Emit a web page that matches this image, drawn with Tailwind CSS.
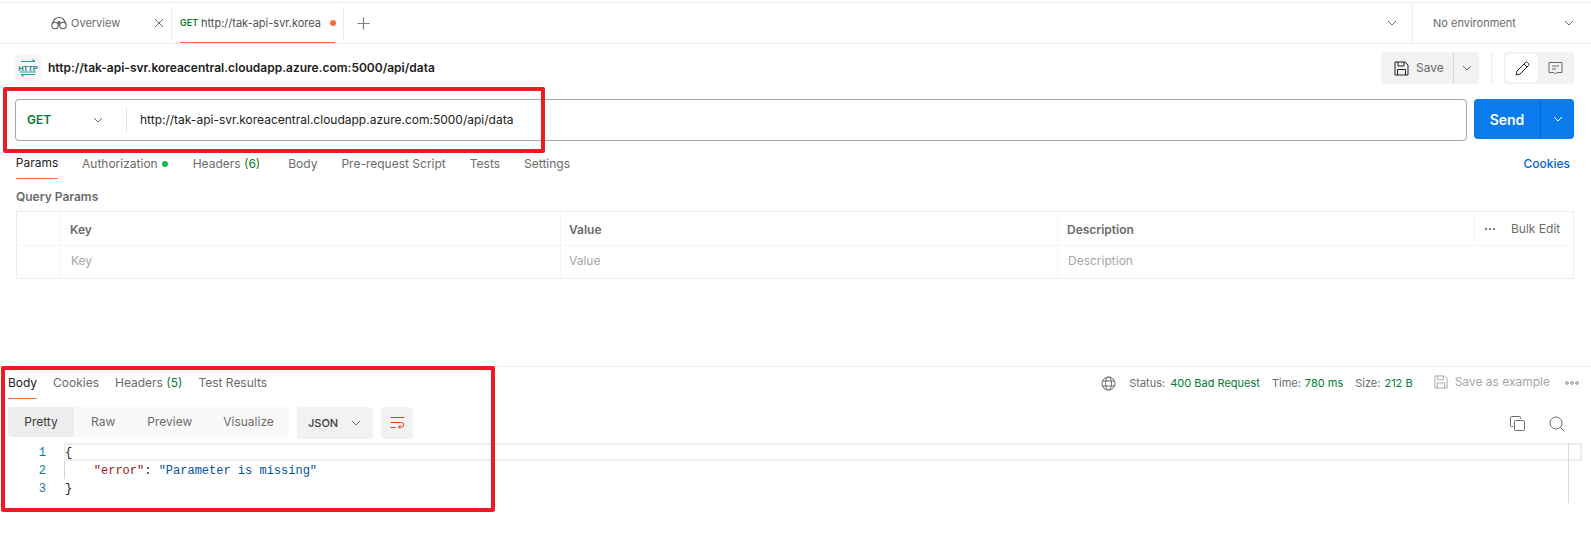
<!DOCTYPE html>
<html>
<head>
<meta charset="utf-8">
<script src="https://cdn.jsdelivr.net/npm/@tailwindcss/browser@4"></script>
</head>
<body class="bg-white">
<div class="relative w-[1591px] h-[537px] overflow-hidden bg-white font-['Inter','Liberation_Sans',sans-serif] text-[12px] text-[#6b6b6b]">

  <!-- tab bar -->
  <div class="mt-[2px] h-[42px] flex items-stretch border-t border-b border-[#ededed]">
    <div class="w-[171px] flex items-center pl-[51px] relative">
      <svg class="w-[16px] h-[16px] mr-[4px]" viewBox="0 0 16 16" fill="none" stroke="#5a5a5a" stroke-width="1.1"><circle cx="4" cy="10.500" r="3.200"/><circle cx="12" cy="10.500" r="3.200"/><path d="M1.500 8.500C2.500 4.500 4 2.500 8 2.500s5.500 2 6.500 6M8 10.500a2.500 2.500 0 0 0-1-3M8 10.500a2.500 2.500 0 0 1 1-3M6.800 7.200c.7-.6 1.700-.6 2.400 0"/></svg>
      <span class="w-[50px] text-[11px] text-[#6b6b6b]">Overview</span>
      <svg class="ml-[33px] w-[10px] h-[10px]" viewBox="0 0 10 10" stroke="#6b6b6b" stroke-width="1"><path d="M1 1l8 8M9 1l-8 8"/></svg>
    </div>
    <div class="w-[172px] flex items-center border-l border-[#ededed] my-[4px] relative">
      <div class="flex items-center w-[158px] ml-[8px] h-full">
        <span class="text-[9px] font-semibold text-[#007f31] w-[21px]">GET</span>
        <span class="w-[123px] text-[11px] whitespace-nowrap text-[#505050]">http://tak-api-svr.korea</span>
        <span class="ml-[6px] w-[6px] h-[6px] rounded-full bg-[#ff6c37]"></span>
      </div>
      <span class="absolute left-[8px] w-[155px] -bottom-[4px] h-px bg-[#ff6c37]"></span>
    </div>
    <div class="flex items-center flex-1 border-l border-[#ededed] my-[4px] pl-[13px]">
      <svg class="w-[13px] h-[13px]" viewBox="0 0 13 13" stroke="#808080" stroke-width="1.200"><path d="M6.500 0.500v12M0.500 6.500h12"/></svg>
      <div class="flex-1"></div>
      <svg class="w-[10px] h-[6px] mr-[15px]" viewBox="0 0 10 6" fill="none" stroke="#6b6b6b"><path d="M1 1l4 4 4-4"/></svg>
    </div>
    <div class="w-[179px] flex items-center border-l border-[#ededed] pl-[20px]">
      <span class="w-[125px] text-[11px] text-[#6b6b6b]">No environment</span>
      <svg class="ml-[6px] w-[10px] h-[6px]" viewBox="0 0 10 6" fill="none" stroke="#6b6b6b"><path d="M1 1l4 4 4-4"/></svg>
    </div>
  </div>

  <!-- request title -->
  <div class="flex items-center h-[32px] mt-[8px] pl-[15px] pr-[17px]">
    <div class="w-[26px] h-[26px] rounded-[4px] bg-[#f7f7f7] flex items-center justify-center">
      <svg class="w-[20px] h-[20px]" viewBox="0 0 20 20" fill="none" stroke="#20a3a8" stroke-width="1.100"><path d="M3 3.500h14M14.500 1.500l2.500 2M3 16.500h14M3 16.500l2.500 2M2 14h16"/><text x="10" y="13" text-anchor="middle" font-size="7.500" font-weight="700" fill="#15808f" stroke="none" font-family="Liberation Sans">HTTP</text></svg>
    </div>
    <span class="ml-[7px] font-semibold text-[#212121]">http://tak-api-svr.koreacentral.cloudapp.azure.com:5000/api/data</span>
    <div class="flex-1"></div>
    <div class="w-[98px] h-[32px] rounded-[4px] bg-[#f2f2f2] flex items-center">
      <div class="w-[73px] h-full flex items-center pl-[13px] border-r border-[#d9d9d9]">
        <svg class="w-[15px] h-[15px]" viewBox="0 0 15 15" fill="none" stroke="#212121"><path d="M1 1h10l3 3v10H1zM4 1v4h6V1M3.500 14V8.500h8V14"/></svg>
        <span class="ml-[7px] text-[#6b6b6b]">Save</span>
      </div>
      <svg class="ml-[8px] w-[10px] h-[6px]" viewBox="0 0 10 6" fill="none" stroke="#6b6b6b"><path d="M1 1l4 4 4-4"/></svg>
    </div>
    <div class="mx-[12px] w-px h-[32px] bg-[#ededed]"></div>
    <div class="w-[70px] h-[32px] rounded-[4px] bg-[#f2f2f2] flex items-center p-[2px]">
      <div class="w-[32px] h-[28px] rounded-[4px] bg-white flex items-center justify-center">
        <svg class="w-[15px] h-[15px]" viewBox="0 0 15 15" fill="none" stroke="#212121"><path d="M1 14l1-4L10.500 1.500a1.400 1.400 0 0 1 2 0l1 1a1.400 1.400 0 0 1 0 2L5 13zM9 3l3 3"/></svg>
      </div>
      <div class="w-[34px] flex items-center justify-center">
        <svg class="w-[15px] h-[15px]" viewBox="0 0 15 15" fill="none" stroke="#6b6b6b"><path d="M1 1.500h13v10H9l-1.500 1.500L6 11.500H1zM4 5h7M4 8h4"/></svg>
      </div>
    </div>
  </div>

  <!-- url bar -->
  <div class="flex items-stretch h-[42px] mt-[15px] pl-[15px] pr-[17px]">
    <div class="w-[1452px] flex items-center rounded-[4px] border border-[#a6a6a6] bg-white">
      <span class="ml-[11px] w-[66px] font-semibold text-[#007f31]">GET</span>
      <svg class="w-[10px] h-[6px]" viewBox="0 0 10 6" fill="none" stroke="#6b6b6b"><path d="M1 1l4 4 4-4"/></svg>
      <div class="ml-[23px] w-px h-[26px] bg-[#e6e6e6]"></div>
      <span class="ml-[13px] text-[#212121]">http://tak-api-svr.koreacentral.cloudapp.azure.com:5000/api/data</span>
    </div>
    <div class="ml-[7px] w-[100px] h-[40px] rounded-[4px] bg-[#097bed] flex items-center text-white">
      <div class="w-[67px] h-full flex items-center justify-center border-r border-[#0265d2] text-[14px] font-semibold">Send</div>
      <svg class="ml-[12px] w-[10px] h-[6px]" viewBox="0 0 10 6" fill="none" stroke="#fff"><path d="M1 1l4 4 4-4"/></svg>
    </div>
  </div>

  <!-- request tabs -->
  <div class="h-[38px] flex items-stretch pl-[16px] pr-[20px]">
    <div class="w-[42px] pt-[7px] flex items-center justify-center text-[#212121] border-b border-[#ff6c37] whitespace-nowrap">Params</div>
    <div class="ml-[24px] pt-[7px] flex items-center whitespace-nowrap">Authorization<span class="ml-[4px] w-[6px] h-[6px] rounded-full bg-[#0cbb52]"></span></div>
    <div class="ml-[25px] pt-[7px] flex items-center whitespace-nowrap">Headers&nbsp;<span class="text-[#007f31]">(6)</span></div>
    <div class="ml-[28px] pt-[7px] flex items-center">Body</div>
    <div class="ml-[24px] pt-[7px] flex items-center whitespace-nowrap">Pre-request Script</div>
    <div class="ml-[24px] pt-[7px] flex items-center">Tests</div>
    <div class="ml-[24px] pt-[7px] flex items-center">Settings</div>
    <div class="flex-1"></div>
    <div class="pt-[7px] mr-[1px] flex items-center font-medium text-[#0265d2]">Cookies</div>
  </div>

  <!-- query params -->
  <div class="mt-[10px] ml-[16px] h-[16px] leading-[16px] font-semibold text-[#6b6b6b]">Query Params</div>
  <div class="mt-[6px] ml-[16px] w-[1558px] border border-[#ededed] text-[#6b6b6b]">
    <div class="grid grid-cols-[44px_500px_497px_417px_1fr] h-[34px] border-b border-[#f5f5f5] font-semibold">
      <div class="border-r border-[#f5f5f5]"></div>
      <div class="border-r border-[#f5f5f5] flex items-center pl-[9px] pt-[2px]">Key</div>
      <div class="border-r border-[#f5f5f5] flex items-center pl-[8px] pt-[2px]">Value</div>
      <div class="border-r border-[#f5f5f5] flex items-center pl-[9px] pt-[2px]">Description</div>
      <div class="flex items-center pl-[9px] font-normal">
        <svg class="w-[12px] h-[4px]" viewBox="0 0 12 4" fill="#808080"><circle cx="2" cy="2" r="1.200"/><circle cx="6" cy="2" r="1.200"/><circle cx="10" cy="2" r="1.200"/></svg>
        <span class="ml-[15px] whitespace-nowrap">Bulk Edit</span>
      </div>
    </div>
    <div class="grid grid-cols-[44px_500px_497px_1fr] h-[32px] text-[#a6a6a6]">
      <div class="border-r border-[#f5f5f5]"></div>
      <div class="border-r border-[#f5f5f5] flex items-center pl-[10px] pb-[2px]">Key</div>
      <div class="border-r border-[#f5f5f5] flex items-center pl-[8px] pb-[2px]">Value</div>
      <div class="flex items-center pl-[10px] pb-[2px]">Description</div>
    </div>
  </div>

  <!-- response -->
  <div class="mt-[87px] border-t border-[#ededed] h-[33px] flex items-stretch pl-[8px] pr-[12px]">
    <div class="w-[29px] flex items-center justify-center text-[#212121] border-b border-[#ff6c37]">Body</div>
    <div class="ml-[16px] flex items-center">Cookies</div>
    <div class="ml-[16px] flex items-center whitespace-nowrap">Headers&nbsp;<span class="text-[#007f31]">(5)</span></div>
    <div class="ml-[16px] flex items-center whitespace-nowrap">Test Results</div>
    <div class="flex-1"></div>
    <div class="flex items-center whitespace-nowrap text-[11px]">
      <svg class="w-[15px] h-[15px] mr-[13px]" viewBox="0 0 15 15" fill="none" stroke="#6b6b6b"><circle cx="7.500" cy="7.500" r="6.500"/><ellipse cx="7.500" cy="7.500" rx="3" ry="6.500"/><path d="M1.500 5h12M1.500 10h12"/></svg>
      <span>Status:</span><span class="ml-[5px] text-[#007f31]">400 Bad Request</span>
      <span class="ml-[12px]">Time:</span><span class="ml-[4px] text-[#007f31]">780 ms</span>
      <span class="ml-[12px]">Size:</span><span class="ml-[4px] text-[#007f31]">212 B</span>
      <svg class="ml-[21px] -mt-[2px] w-[14px] h-[14px]" viewBox="0 0 15 15" fill="none" stroke="#a6a6a6"><path d="M1 1h10l3 3v10H1zM4 1v4h6V1M3.500 14V8.500h8V14"/></svg>
      <span class="ml-[7px] -mt-[2px] text-[12px] text-[#a6a6a6]">Save as example</span>
      <svg class="ml-[15px] w-[14px] h-[4px]" viewBox="0 0 14 4" fill="none" stroke="#6b6b6b" stroke-width=".8"><circle cx="2" cy="2" r="1.300"/><circle cx="7" cy="2" r="1.300"/><circle cx="12" cy="2" r="1.300"/></svg>
    </div>
  </div>

  <!-- response toolbar -->
  <div class="mt-[8px] flex items-start pl-[8px] pr-[26px] h-[32px]">
    <div class="w-[281px] h-[30px] rounded-[4px] bg-[#f9f9f9] flex items-center">
      <div class="w-[66px] h-full rounded-l-[4px] bg-[#ededed] flex items-center justify-center text-[#3b3b3b]">Pretty</div>
      <span class="ml-[17px]">Raw</span>
      <span class="ml-[32px]">Preview</span>
      <span class="ml-[31px]">Visualize</span>
    </div>
    <div class="ml-[8px] w-[76px] h-[32px] rounded-[4px] bg-[#f2f2f2] flex items-center pl-[11px] font-medium text-[11px] text-[#3b3b3b]">
      JSON
      <svg class="ml-[13px] w-[10px] h-[6px]" viewBox="0 0 10 6" fill="none" stroke="#6b6b6b"><path d="M1 1l4 4 4-4"/></svg>
    </div>
    <div class="ml-[8px] w-[32px] h-[32px] rounded-[4px] bg-[#f2f2f2] flex items-center justify-center">
      <svg class="w-[15px] h-[14px]" viewBox="0 0 15 14" fill="none" stroke="#d8431f"><path d="M.500 1.500h14M.500 6.500h11a2 2 0 0 1 0 4.500H8.500M10.500 9l-2 2 2 2M.500 11.500h5"/></svg>
    </div>
    <div class="flex-1"></div>
    <svg class="mt-[9px] w-[15px] h-[15px]" viewBox="0 0 15 15" fill="none" stroke="#6b6b6b"><rect x="4.500" y="4.500" width="10" height="10" rx="1"/><path d="M3 10.500H1.500a1 1 0 0 1-1-1v-8a1 1 0 0 1 1-1h8a1 1 0 0 1 1 1V3"/></svg>
    <svg class="ml-[24px] mt-[9px] w-[16px] h-[16px]" viewBox="0 0 16 16" fill="none" stroke="#6b6b6b"><circle cx="7" cy="7" r="6"/><path d="M11.500 11.500l4 4"/></svg>
  </div>

  <!-- editor -->
  <div class="relative mt-[4px] h-[60px] font-['Liberation_Mono',monospace] leading-[18px]">
    <div class="absolute left-[64px] right-[9px] top-0 h-[18px] border-2 border-[#eeeeee]"></div>
    <div class="absolute left-[64px] top-[18px] h-[18px] w-px bg-[#d4d4d4]"></div>
    <div class="absolute left-[1568px] top-0 h-[60px] w-px bg-[#d9d9d9]"></div>
    <div class="relative grid grid-cols-[46px_1fr] gap-x-[19px] pt-[1px]">
      <span class="text-right text-[#0a7a9c]">1</span><span class="text-[#212121]">{</span>
      <span class="text-right text-[#0a7a9c]">2</span><span class="whitespace-pre text-[#212121]">    <span class="text-[#a31515]">"error"</span>: <span class="text-[#0451a5]">"Parameter is missing"</span></span>
      <span class="text-right text-[#0a7a9c]">3</span><span class="text-[#212121]">}</span>
    </div>
  </div>

  <!-- annotation boxes -->
  <div class="absolute left-[3px] top-[87px] w-[542px] h-[66px] border-4 border-[#ed1c24] rounded-[2px]"></div>
  <div class="absolute left-[1px] top-[366px] w-[494px] h-[146px] border-4 border-[#ed1c24] rounded-[2px]"></div>
</div>
</body>
</html>
